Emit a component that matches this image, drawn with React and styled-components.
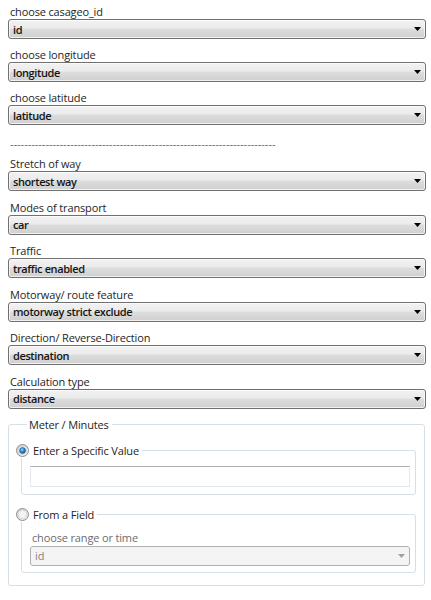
import React from "react";
import styled, { createGlobalStyle, css } from "styled-components";

const GlobalStyle = createGlobalStyle`
  html, body {
    margin: 0;
    padding: 0;
    background: #ffffff;
  }
  body {
    font-family: "Open Sans", "Noto Sans", sans-serif;
    font-size: 11px;
    letter-spacing: -0.15px;
    color: #1e1e1e;
  }
`;

const Page = styled.div`
  width: 431px;
  padding: 4px 5px 0 8px;
  box-sizing: border-box;
  display: flex;
  flex-direction: column;
`;

const Group = styled.div`
  display: flex;
  flex-direction: column;
  margin-bottom: ${(props) => props.gap || "8px"};
`;

const Label = styled.div`
  height: ${(props) => (props.disabled ? "16px" : "15px")};
  line-height: 15px;
  padding-left: 2px;
  color: ${(props) => (props.disabled ? "#6d6d6d" : "#1e1e1e")};
  white-space: nowrap;
`;

const Combo = styled.div`
  height: 20px;
  box-sizing: border-box;
  border: 1px solid #707070;
  border-radius: 3px;
  display: flex;
  align-items: center;
  justify-content: space-between;
  padding: 0 4px 0 4px;
  font-weight: 600;
  letter-spacing: -0.4px;
  color: #151515;
  background: linear-gradient(#f2f2f2 0%, #ebebeb 45%, #dddddd 50%, #cfcfcf 100%);
  box-shadow: inset 0 0 0 1px rgba(255, 255, 255, 0.7);

  ${(props) =>
    props.disabled &&
    css`
      border-color: #adb2b5;
      background: #f4f4f4;
      box-shadow: none;
      font-weight: 400;
      letter-spacing: -0.15px;
      color: #838383;
    `}
`;

const Arrow = ({ color = "#000000" }) => (
  <svg width="7" height="4" viewBox="0 0 7 4">
    <path d="M0 0 H7 L3.5 4 Z" fill={color} />
  </svg>
);

const Divider = styled.div`
  height: 15px;
  line-height: 15px;
  margin: 3px 0 5px 2px;
  color: #666666;
  letter-spacing: 0;
  white-space: nowrap;
`;

const Fieldset = styled.fieldset`
  margin: ${(props) => props.margin || "0"};
  padding: ${(props) => props.padding || "0"};
  border: 1px solid #d5dfe5;
  border-radius: 3px;
  min-width: 0;
`;

const Legend = styled.legend`
  padding: 0 3px 0 2px;
  margin-left: ${(props) => props.offset || "6px"};
  line-height: 15px;
  display: flex;
  align-items: center;
  gap: 4px;
`;

const TextBox = styled.div`
  height: 21px;
  box-sizing: border-box;
  border: 1px solid #e3e9ef;
  border-top-color: #abadb3;
  background: #ffffff;
`;

const Radio = ({ checked }) => (
  <svg width="13" height="13" viewBox="0 0 13 13">
    <defs>
      <linearGradient id={checked ? "rgOn" : "rgOff"} x1="0" y1="0" x2="1" y2="1">
        <stop offset="0" stopColor="#cfcfcf" />
        <stop offset="1" stopColor="#f6f6f6" />
      </linearGradient>
      <radialGradient id="dot" cx="0.4" cy="0.35" r="0.7">
        <stop offset="0" stopColor="#8fd5ff" />
        <stop offset="0.5" stopColor="#2a8fd8" />
        <stop offset="1" stopColor="#0d4f8c" />
      </radialGradient>
    </defs>
    <circle cx="6.5" cy="6.5" r="6" fill={`url(#${checked ? "rgOn" : "rgOff"})`} stroke="#8f8f8f" strokeWidth="1" />
    <circle cx="6.5" cy="6.5" r="4.2" fill="#f3f3f3" stroke="#c9c9c9" strokeWidth="0.6" />
    {checked && <circle cx="6.5" cy="6.5" r="3" fill="url(#dot)" stroke="#17406a" strokeWidth="0.5" />}
  </svg>
);

const fields = [
  ["choose casageo_id", "id"],
  ["choose longitude", "longitude"],
  ["choose latitude", "latitude"],
];

const options = [
  ["Stretch of way", "shortest way"],
  ["Modes of transport", "car"],
  ["Traffic", "traffic enabled"],
  ["Motorway/ route feature", "motorway strict exclude"],
  ["Direction/ Reverse-Direction", "destination"],
  ["Calculation type", "distance"],
];

const Select = ({ label, value }) => (
  <>
    <Label>{label}</Label>
    <Combo>
      <span>{value}</span>
      <Arrow />
    </Combo>
  </>
);

export default function App() {
  return (
    <>
      <GlobalStyle />
      <Page>
        {fields.map(([label, value]) => (
          <Group key={label}>
            <Select label={label} value={value} />
          </Group>
        ))}
        <Divider>{"-".repeat(75)}</Divider>
        {options.map(([label, value]) => (
          <Group key={label} gap="8.6px">
            <Select label={label} value={value} />
          </Group>
        ))}
        <Fieldset margin="-1px 1px 0 0" padding="2px 8px 12px 12px">
          <Legend offset="6px">Meter / Minutes</Legend>
          <Fieldset margin="9px 0 0 0" padding="8px 5px 7px 8px">
            <Legend offset="-16px">
              <Radio checked />
              <span>Enter a Specific Value</span>
            </Legend>
            <TextBox />
          </Fieldset>
          <Fieldset margin="12px 0 0 0" padding="8px 5px 6px 8px">
            <Legend offset="-16px">
              <Radio />
              <span>From a Field</span>
            </Legend>
            <Label disabled>choose range or time</Label>
            <Combo disabled>
              <span>id</span>
              <Arrow color="#a0a0a0" />
            </Combo>
          </Fieldset>
        </Fieldset>
      </Page>
    </>
  );
}
